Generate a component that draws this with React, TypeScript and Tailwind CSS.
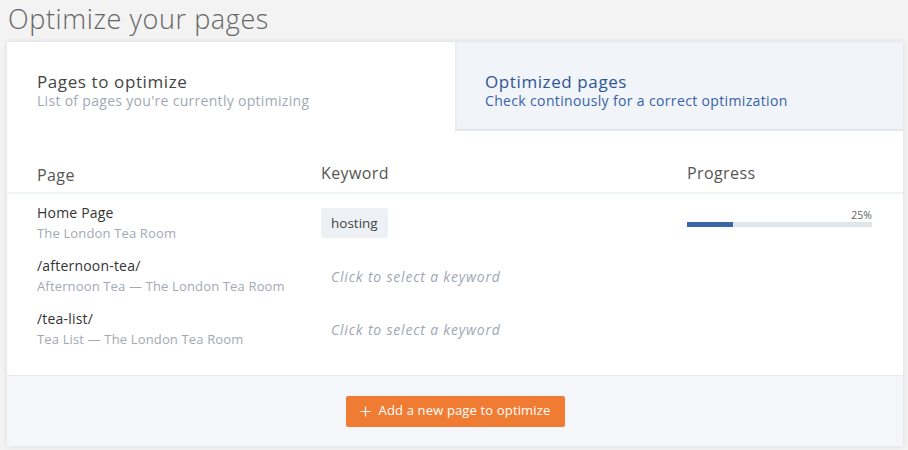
import React from "react";

const rows = [
  { path: "Home Page", title: "The London Tea Room", keyword: "hosting", progress: 25 },
  { path: "/afternoon-tea/", title: "Afternoon Tea — The London Tea Room" },
  { path: "/tea-list/", title: "Tea List — The London Tea Room" },
];

const App = () => {
  return (
    <div className="w-[908px] h-[450px] overflow-hidden bg-[#f3f3f3] font-['Open_Sans',sans-serif]">
      <h1 className="h-[42px] pl-[8px] pt-[1px] text-[27px] leading-[36px] font-light tracking-[0.6px] text-[#666]">
        Optimize your pages
      </h1>
      <div className="mx-[7px] w-[896px] h-[404px] flex flex-col bg-white shadow-[0_0_6px_rgba(0,0,0,0.1)]">
        <div className="flex h-[89px]">
          <div className="w-[448px] bg-white pl-[30px] pt-[29px]">
            <div className="text-[17px] leading-[21px] font-medium tracking-[0.6px] text-[#444]">Pages to optimize</div>
            <div className="text-[14px] leading-[18px] tracking-[0.3px] text-[#a3a9b3]">
              List of pages you're currently optimizing
            </div>
          </div>
          <div className="flex-1 bg-[#f1f4f8] pl-[30px] pt-[29px] border-b-2 border-[#e4e7eb] shadow-[inset_2px_0_3px_rgba(0,0,0,0.04)]">
            <div className="text-[17px] leading-[21px] font-medium tracking-[0.6px] text-[#2e5597]">Optimized pages</div>
            <div className="text-[14px] leading-[18px] tracking-[0.35px] text-[#3763a6]">
              Check continously for a correct optimization
            </div>
          </div>
        </div>

        <div className="flex h-[63px] items-end border-b-2 border-[#eef3f6] pl-[30px] pb-[9px] text-[16px] leading-[20px] tracking-[0.4px] text-[#555]">
          <div className="w-[284px] translate-y-[2px]">Page</div>
          <div className="w-[366px]">Keyword</div>
          <div className="w-[185px]">Progress</div>
        </div>

        <div className="flex flex-col gap-[11px] pt-[8px] pb-[25px] pl-[30px]">
          {rows.map((r) => (
            <div key={r.path} className="flex h-[42px] items-center">
              <div className="w-[284px]">
                <div className="text-[14px] leading-[20px] font-medium tracking-[0.2px] text-[#333]">{r.path}</div>
                <div className="text-[13px] leading-[20px] tracking-[0.15px] text-[#a3a9b3]">{r.title}</div>
              </div>
              <div className="w-[366px]">
                {r.keyword ? (
                  <span className="inline-flex h-[30px] items-center rounded-[3px] bg-[#edf1f5] px-[10px] text-[13.5px] text-[#444]">
                    {r.keyword}
                  </span>
                ) : (
                  <span className="pl-[10px] text-[14px] italic tracking-[0.8px] text-[#a0a7b4]">
                    Click to select a keyword
                  </span>
                )}
              </div>
              <div className="w-[185px] self-start pt-[7px]">
                {r.progress !== undefined && (
                  <>
                    <div className="text-right text-[10.5px] leading-[12px] text-[#666]">{r.progress}%</div>
                    <div className="mt-[1px] h-[5px] w-full bg-[#e0e5ea]">
                      <div className="h-full bg-[#3b67a6]" style={{ width: `${r.progress}%` }} />
                    </div>
                  </>
                )}
              </div>
            </div>
          ))}
        </div>

        <div className="flex flex-1 items-center justify-center border-t border-[#e6e9ee] bg-[#f4f6fa]">
          <button className="flex h-[31px] w-[219px] items-center justify-center gap-[8px] rounded-[2px] bg-[#f07c33] text-[13px] tracking-[0.15px] text-white">
            <svg width="11" height="11" viewBox="0 0 11 11" fill="none" stroke="white" strokeWidth="1.2">
              <path d="M5.5 0.5v10M0.5 5.5h10" />
            </svg>
            Add a new page to optimize
          </button>
        </div>
      </div>
    </div>
  );
};

export default App;
